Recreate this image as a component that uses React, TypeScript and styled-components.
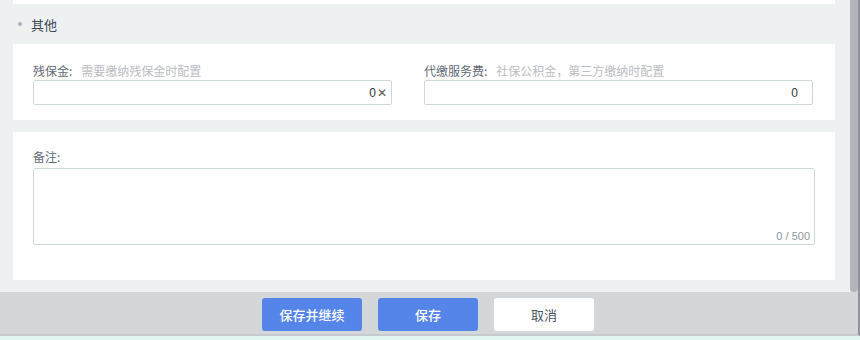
import React from "react";
import styled, { createGlobalStyle } from "styled-components";

const Global = createGlobalStyle`
  html, body { margin: 0; padding: 0; }
  body {
    width: 860px; height: 340px; overflow: hidden;
    font-family: "Noto Sans CJK SC", "Noto Sans", sans-serif;
    background: #eef1f2;
  }
  * { box-sizing: border-box; }
`;

const Root = styled.div`
  width: 860px;
  height: 340px;
  display: flex;
  flex-direction: column;
`;

const Main = styled.div`
  height: 292px;
  display: flex;
`;

const Content = styled.div`
  flex: 1;
  background: #eef1f2;
  padding: 0 13px 0 13px;
  display: flex;
  flex-direction: column;
  overflow: hidden;
`;

const Gutter = styled.div`
  width: 12px;
  display: flex;
  padding-left: 2px;
  background: #eef1f2;
  border-right: 2px solid #8f929a;
`;

const Thumb = styled.div`
  width: 8px;
  height: 292px;
  background: #b2b5bc;
  border-radius: 0 0 3px 3px;
`;

const Card = styled.div<{ $h: number; $pt: number }>`
  background: #fff;
  height: ${(p) => p.$h}px;
  padding: ${(p) => p.$pt}px 20px 0 20px;
  flex-shrink: 0;
`;

const SectionTitle = styled.div`
  height: 40px;
  display: flex;
  align-items: center;
  padding-left: 5px;
  gap: 9px;
  font-size: 13px;
  color: #3c4856;
  flex-shrink: 0;
`;

const Dot = styled.span`
  width: 4px;
  height: 4px;
  border-radius: 50%;
  background: #a6adb5;
`;

const Row = styled.div`
  display: flex;
`;

const Field = styled.div<{ $w: number; $gap: number }>`
  width: ${(p) => p.$w}px;
  margin-right: ${(p) => p.$gap}px;
  display: flex;
  flex-direction: column;
`;

const Label = styled.div`
  height: 18px;
  line-height: 18px;
  font-size: 12px;
  color: #5f6a76;
  display: flex;
  gap: 9px;
`;

const Hint = styled.span`
  color: #b9bdc2;
`;

const Input = styled.div`
  height: 25px;
  border: 1px solid #cdd7da;
  border-radius: 2px;
  display: flex;
  align-items: center;
  justify-content: flex-end;
  padding-right: 14px;
  font-size: 12px;
  color: #333;
  font-family: "Liberation Sans", "Noto Sans", sans-serif;
`;

const Clear = styled.span`
  margin-left: 1px;
  margin-right: -10px;
  font-size: 12px;
  color: #555;
`;

const Spacer = styled.div`
  height: 12px;
  flex-shrink: 0;
`;

const TextArea = styled.div`
  margin-top: 2px;
  height: 77px;
  border: 1px solid #cdd7da;
  border-radius: 2px;
  display: flex;
  align-items: flex-end;
  justify-content: flex-end;
  padding: 0 4px 2px 0;
`;

const Counter = styled.span`
  font-size: 11px;
  color: #8d949b;
  font-family: "Liberation Sans", "Noto Sans", sans-serif;
`;

const Footer = styled.div`
  height: 44px;
  background: #d3d7da;
  border-bottom: 2px solid #c6cace;
  border-right: 2px solid #8f929a;
  display: flex;
  justify-content: center;
  align-items: flex-start;
  padding-top: 6px;
  padding-left: 0;
  padding-right: 2px;
  gap: 16px;
`;

const Button = styled.button<{ $primary?: boolean }>`
  width: 100px;
  height: 33px;
  border: none;
  border-radius: 3px;
  font-family: "Noto Sans CJK SC", sans-serif;
  font-size: 13px;
  background: ${(p) => (p.$primary ? "#5585e8" : "#ffffff")};
  color: ${(p) => (p.$primary ? "#ffffff" : "#4a5561")};
  font-weight: ${(p) => (p.$primary ? 500 : 400)};
`;

const Strip = styled.div`
  height: 4px;
  background: #e2f7f4;
`;

export default function App() {
  return (
    <>
      <Global />
      <Root>
        <Main>
          <Content>
            <Card $h={4} $pt={0} />
            <SectionTitle>
              <Dot />
              其他
            </SectionTitle>
            <Card $h={76} $pt={18}>
              <Row>
                <Field $w={359} $gap={32}>
                  <Label>
                    残保金:<Hint>需要缴纳残保金时配置</Hint>
                  </Label>
                  <Input>
                    0<Clear>✕</Clear>
                  </Input>
                </Field>
                <Field $w={389} $gap={0}>
                  <Label>
                    代缴服务费:<Hint>社保公积金，第三方缴纳时配置</Hint>
                  </Label>
                  <Input>0</Input>
                </Field>
              </Row>
            </Card>
            <Spacer />
            <Card $h={148} $pt={16}>
              <Label>备注:</Label>
              <TextArea>
                <Counter>0 / 500</Counter>
              </TextArea>
            </Card>
          </Content>
          <Gutter>
            <Thumb />
          </Gutter>
        </Main>
        <Footer>
          <Button $primary>保存并继续</Button>
          <Button $primary>保存</Button>
          <Button>取消</Button>
        </Footer>
        <Strip />
      </Root>
    </>
  );
}
